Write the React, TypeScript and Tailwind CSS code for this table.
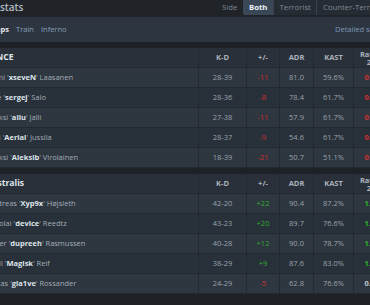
import React from "react";

type P = { first: string; nick: string; last: string; kd: string; pm: string; adr: string; kast: string; rating: string; rc: "red" | "green" | "gray" };

const ence: P[] = [
  { first: "Sami", nick: "xseveN", last: "Laasanen", kd: "28-39", pm: "-11", adr: "81.0", kast: "59.6%", rating: "0.89", rc: "red" },
  { first: "Jere", nick: "sergej", last: "Salo", kd: "28-36", pm: "-8", adr: "78.4", kast: "61.7%", rating: "0.90", rc: "red" },
  { first: "Aleksi", nick: "allu", last: "Jalli", kd: "27-38", pm: "-11", adr: "57.9", kast: "61.7%", rating: "0.78", rc: "red" },
  { first: "Jani", nick: "Aerial", last: "Jussila", kd: "28-37", pm: "-9", adr: "54.6", kast: "61.7%", rating: "0.82", rc: "red" },
  { first: "Aleksi", nick: "Aleksib", last: "Virolainen", kd: "18-39", pm: "-21", adr: "50.7", kast: "51.1%", rating: "0.58", rc: "red" },
];

const astralis: P[] = [
  { first: "Andreas", nick: "Xyp9x", last: "Højsleth", kd: "42-20", pm: "+22", adr: "90.4", kast: "87.2%", rating: "1.41", rc: "green" },
  { first: "Nicolai", nick: "device", last: "Reedtz", kd: "43-23", pm: "+20", adr: "89.7", kast: "76.6%", rating: "1.39", rc: "green" },
  { first: "Peter", nick: "dupreeh", last: "Rasmussen", kd: "40-28", pm: "+12", adr: "90.0", kast: "78.7%", rating: "1.27", rc: "green" },
  { first: "Emil", nick: "Magisk", last: "Reif", kd: "38-29", pm: "+9", adr: "87.6", kast: "83.0%", rating: "1.20", rc: "green" },
  { first: "Lukas", nick: "gla1ve", last: "Rossander", kd: "24-29", pm: "-5", adr: "62.8", kast: "76.6%", rating: "0.97", rc: "gray" },
];

function Cell({ w, children }: { w: string; children?: React.ReactNode }) {
  return (
    <div className={`${w} h-full shrink-0 flex items-center justify-center border-l border-[#232930]`}>
      {children}
    </div>
  );
}

function Table({ team, players }: { team: string; players: P[] }) {
  return (
    <div className="flex flex-col">
      <div className="flex h-[20px] bg-[#2a3039] border-b border-[#232930] items-center">
        <div className="w-[198px] shrink-0 h-full flex items-center overflow-hidden whitespace-nowrap">
          <span className="-ml-[8.5px] text-[8.6px] font-bold text-[#dfe5ea]">{team}</span>
        </div>
        <Cell w="w-[48px]"><span className="text-[7.5px] font-bold text-[#aab2bb]">K-D</span></Cell>
        <Cell w="w-[33px]"><span className="text-[7.5px] font-bold text-[#aab2bb]">+/-</span></Cell>
        <Cell w="w-[34px]"><span className="text-[7.5px] font-bold text-[#aab2bb]">ADR</span></Cell>
        <Cell w="w-[40px]"><span className="text-[7.5px] font-bold text-[#aab2bb]">KAST</span></Cell>
        <Cell w="w-[37px]">
          <span className="text-[7.5px] font-bold text-[#aab2bb] leading-[8px] text-center">
            Rating
            <br />
            2.0
          </span>
        </Cell>
      </div>
      {players.map((p, i) => (
        <div
          key={p.nick}
          className={`flex h-[20px] items-center border-b border-[#232930] ${i % 2 === 0 ? "bg-[#2e3640]" : "bg-[#283039]"}`}
        >
          <div className="w-[198px] shrink-0 h-full flex items-center overflow-hidden whitespace-nowrap text-[7.5px] text-[#a2acb6]">
            <span className="-ml-[12px]">
              {p.first} '<span className="font-bold text-[#dde4ea]">{p.nick}</span>' {p.last}
            </span>
          </div>
          <Cell w="w-[48px]"><span className="text-[7.5px] text-[#9aa3ac]">{p.kd}</span></Cell>
          <Cell w="w-[33px]">
            <span className={`text-[7.5px] ${p.pm.startsWith("+") ? "text-[#2eae2e]" : "text-[#d42f2f]"}`}>{p.pm}</span>
          </Cell>
          <Cell w="w-[34px]"><span className="text-[7.5px] text-[#9aa3ac]">{p.adr}</span></Cell>
          <Cell w="w-[40px]"><span className="text-[7.5px] text-[#9aa3ac]">{p.kast}</span></Cell>
          <Cell w="w-[37px]">
            <span
              className={`text-[7.5px] font-bold ${
                p.rc === "red" ? "text-[#d42f2f]" : p.rc === "green" ? "text-[#2eae2e]" : "text-[#c3cad1]"
              }`}
            >
              {p.rating}
            </span>
          </Cell>
        </div>
      ))}
    </div>
  );
}

export default function App() {
  return (
    <div
      className="w-[370px] h-[305px] overflow-hidden bg-[#1e2227] flex flex-col"
      style={{ fontFamily: '"Open Sans", "Noto Sans", sans-serif' }}
    >
      <div className="h-[17px] flex items-start shrink-0 bg-[#202429] whitespace-nowrap">
        <div className="w-[222px] shrink-0 h-[15px] flex items-center overflow-hidden">
          <span className="-ml-[33px] text-[10px] font-semibold text-[#b3bbc3]">Match stats</span>
        </div>
        <div className="h-[15px] flex items-center text-[7.8px] text-[#7f8891]">Side</div>
        <div className="ml-[6px] flex h-[15px]">
          <div className="px-[5.5px] flex items-center bg-[#3a4757] text-[7.8px] font-bold text-[#eef2f5] rounded-bl-[2px]">Both</div>
          <div className="px-[5.5px] flex items-center bg-[#262c33] border-l border-[#39424d] text-[7.8px] text-[#7f8a95]">Terrorist</div>
          <div className="px-[5.5px] flex items-center bg-[#262c33] border-l border-[#39424d] text-[7.8px] text-[#7f8a95]">Counter-Terrorist</div>
        </div>
      </div>
      <div className="h-[25px] shrink-0 bg-[#2c3540] flex items-center whitespace-nowrap text-[7.5px]">
        <div className="w-[335px] shrink-0 flex items-center gap-[7px] overflow-hidden">
          <span className="-ml-[23px] font-bold text-[#e3e8ed]">All maps</span>
          <span className="text-[#889fb8]">Train</span>
          <span className="text-[#889fb8]">Inferno</span>
        </div>
        <span className="text-[#7e98b5]">Detailed stats</span>
      </div>
      <div className="h-[6px] shrink-0" />
      <Table team="ENCE" players={ence} />
      <div className="h-[6px] shrink-0" />
      <Table team="Astralis" players={astralis} />
    </div>
  );
}
